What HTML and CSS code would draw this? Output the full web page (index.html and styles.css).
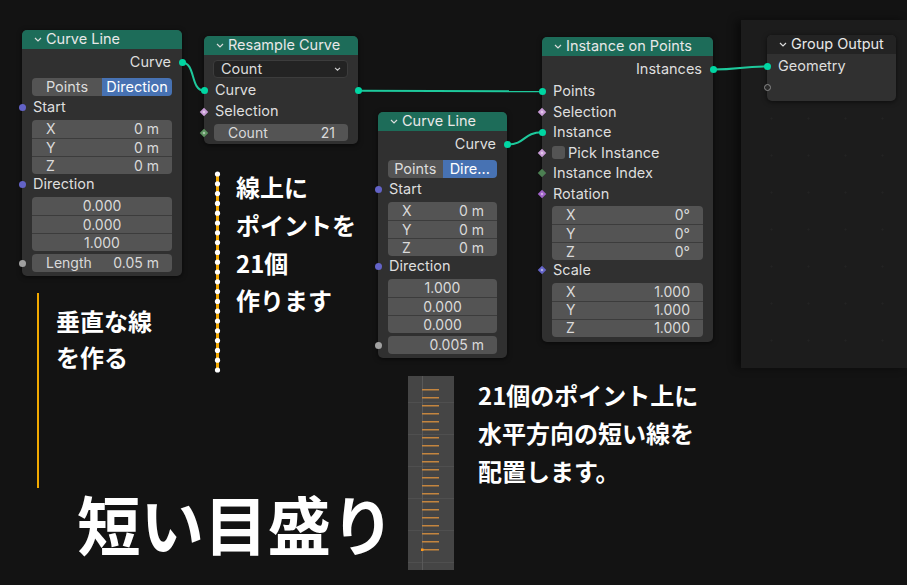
FILE: index.html
```html
<!DOCTYPE html>
<html lang="ja">
<head>
<meta charset="utf-8">
<title>短い目盛り</title>
<link rel="stylesheet" href="styles.css">
</head>
<body>
<div class="stage">
  <div class="editor-panel"></div>

  <svg class="links" width="907" height="585" viewBox="0 0 907 585">
    <path d="M182 62.5 C196 62.5 190 90.5 204 90.5"/>
    <path d="M358 90.8 L542 91.2"/>
    <path d="M507 144.5 C526 144.5 523 132.3 542 132.3"/>
    <path d="M713 69.5 C740 69.5 740 66.5 767 66.5"/>
  </svg>

  <!-- Curve Line (vertical) -->
  <div class="node n1">
    <div class="head"><svg class="chev" viewBox="0 0 8 5"><path d="M1 1 L4 4 L7 1"/></svg>Curve Line</div>
    <div class="body">
      <div class="row out">Curve<span class="sock geo r"></span></div>
      <div class="toggle"><span class="seg">Points</span><span class="seg on">Direction</span></div>
      <div class="row"><span class="sock vecs l"></span>Start</div>
      <div class="vec">
        <div class="vrow"><span>X</span><span>0 m</span></div>
        <div class="vrow"><span>Y</span><span>0 m</span></div>
        <div class="vrow"><span>Z</span><span>0 m</span></div>
      </div>
      <div class="row"><span class="sock vecs l"></span>Direction</div>
      <div class="vec mid">
        <div class="vrow">0.000</div>
        <div class="vrow">0.000</div>
        <div class="vrow">1.000</div>
      </div>
      <div class="frow"><span class="sock flt l"></span><div class="field"><span>Length</span><span>0.05 m</span></div></div>
    </div>
  </div>

  <!-- Resample Curve -->
  <div class="node n2">
    <div class="head"><svg class="chev" viewBox="0 0 8 5"><path d="M1 1 L4 4 L7 1"/></svg>Resample Curve</div>
    <div class="body b2">
      <div class="drop"><span>Count</span><svg class="dchev" viewBox="0 0 7 4"><path d="M1 0.8 L3.5 3.2 L6 0.8"/></svg></div>
      <div class="row"><span class="sock geo l"></span>Curve<span class="sock geo r"></span></div>
      <div class="row"><span class="dia pink l"></span>Selection</div>
      <div class="frow f2"><span class="dia green dot l"></span><div class="field cnt"><span>Count</span><span>21</span></div></div>
    </div>
  </div>

  <!-- Curve Line (short) -->
  <div class="node n3">
    <div class="head"><svg class="chev" viewBox="0 0 8 5"><path d="M1 1 L4 4 L7 1"/></svg>Curve Line</div>
    <div class="body">
      <div class="row out">Curve<span class="sock geo r"></span></div>
      <div class="toggle"><span class="seg">Points</span><span class="seg on">Dire...</span></div>
      <div class="row"><span class="sock vecs l"></span>Start</div>
      <div class="vec">
        <div class="vrow"><span>X</span><span>0 m</span></div>
        <div class="vrow"><span>Y</span><span>0 m</span></div>
        <div class="vrow"><span>Z</span><span>0 m</span></div>
      </div>
      <div class="row"><span class="sock vecs l"></span>Direction</div>
      <div class="vec mid">
        <div class="vrow">1.000</div>
        <div class="vrow">0.000</div>
        <div class="vrow">0.000</div>
      </div>
      <div class="frow"><span class="sock flt l"></span><div class="field end"><span>0.005 m</span></div></div>
    </div>
  </div>

  <!-- Instance on Points -->
  <div class="node n4">
    <div class="head"><svg class="chev" viewBox="0 0 8 5"><path d="M1 1 L4 4 L7 1"/></svg>Instance on Points</div>
    <div class="body b4">
      <div class="row out">Instances<span class="sock geo r"></span></div>
      <div class="row t first"><span class="sock geo l"></span>Points</div>
      <div class="row t"><span class="dia pink l"></span>Selection</div>
      <div class="row t"><span class="sock geo l"></span>Instance</div>
      <div class="row t pick"><span class="dia pink l"></span><span class="check"></span>Pick Instance</div>
      <div class="row t"><span class="dia dgreen l"></span>Instance Index</div>
      <div class="row t"><span class="dia purple l"></span>Rotation</div>
      <div class="vec">
        <div class="vrow"><span>X</span><span>0°</span></div>
        <div class="vrow"><span>Y</span><span>0°</span></div>
        <div class="vrow"><span>Z</span><span>0°</span></div>
      </div>
      <div class="row t"><span class="dia blue l"></span>Scale</div>
      <div class="vec">
        <div class="vrow"><span>X</span><span>1.000</span></div>
        <div class="vrow"><span>Y</span><span>1.000</span></div>
        <div class="vrow"><span>Z</span><span>1.000</span></div>
      </div>
    </div>
  </div>

  <!-- Group Output -->
  <div class="node n5">
    <div class="head dark"><svg class="chev" viewBox="0 0 8 5"><path d="M1 1 L4 4 L7 1"/></svg>Group Output</div>
    <div class="body b5">
      <div class="row"><span class="sock geo l"></span>Geometry</div>
      <div class="row"><span class="sock empty l"></span></div>
    </div>
  </div>

  <!-- annotations -->
  <div class="vline"></div>
  <div class="note note1">垂直な線<br>を作る</div>

  <svg class="dots" width="11" height="205" viewBox="0 0 11 205">
    <line x1="5.5" y1="4" x2="5.5" y2="200"/>
    <circle cx="5.5" cy="4" r="2.6"/><circle cx="5.5" cy="13.8" r="2.6"/><circle cx="5.5" cy="23.6" r="2.6"/>
    <circle cx="5.5" cy="33.4" r="2.6"/><circle cx="5.5" cy="43.2" r="2.6"/><circle cx="5.5" cy="53" r="2.6"/>
    <circle cx="5.5" cy="62.8" r="2.6"/><circle cx="5.5" cy="72.6" r="2.6"/><circle cx="5.5" cy="82.4" r="2.6"/>
    <circle cx="5.5" cy="92.2" r="2.6"/><circle cx="5.5" cy="102" r="2.6"/><circle cx="5.5" cy="111.8" r="2.6"/>
    <circle cx="5.5" cy="121.6" r="2.6"/><circle cx="5.5" cy="131.4" r="2.6"/><circle cx="5.5" cy="141.2" r="2.6"/>
    <circle cx="5.5" cy="151" r="2.6"/><circle cx="5.5" cy="160.8" r="2.6"/><circle cx="5.5" cy="170.6" r="2.6"/>
    <circle cx="5.5" cy="180.4" r="2.6"/><circle cx="5.5" cy="190.2" r="2.6"/><circle cx="5.5" cy="200" r="2.6"/>
  </svg>
  <div class="note note2">線上に<br>ポイントを<br>21個<br>作ります</div>

  <svg class="preview" width="46" height="194" viewBox="0 0 46 194">
    <rect class="pv-bg" x="0" y="0" width="46" height="194"/>
    <g class="pv-grid">
      <line x1="0" y1="26.5" x2="46" y2="26.5"/><line x1="0" y1="58.5" x2="46" y2="58.5"/>
      <line x1="0" y1="90.5" x2="46" y2="90.5"/><line x1="0" y1="122.5" x2="46" y2="122.5"/>
      <line x1="0" y1="154.5" x2="46" y2="154.5"/><line x1="0" y1="186.5" x2="46" y2="186.5"/>
    </g>
    <line class="pv-axis" x1="14.5" y1="0" x2="14.5" y2="194"/>
    <g class="pv-ticks">
      <rect x="14" y="13" width="17" height="1.5"/><rect x="14" y="21" width="17" height="1.5"/>
      <rect x="14" y="29" width="17" height="1.5"/><rect x="14" y="37" width="17" height="1.5"/>
      <rect x="14" y="45" width="17" height="1.5"/><rect x="14" y="53" width="17" height="1.5"/>
      <rect x="14" y="61" width="17" height="1.5"/><rect x="14" y="69" width="17" height="1.5"/>
      <rect x="14" y="77" width="17" height="1.5"/><rect x="14" y="85" width="17" height="1.5"/>
      <rect x="14" y="93" width="17" height="1.5"/><rect x="14" y="101" width="17" height="1.5"/>
      <rect x="14" y="109" width="17" height="1.5"/><rect x="14" y="117" width="17" height="1.5"/>
      <rect x="14" y="125" width="17" height="1.5"/><rect x="14" y="133" width="17" height="1.5"/>
      <rect x="14" y="141" width="17" height="1.5"/><rect x="14" y="149" width="17" height="1.5"/>
      <rect x="14" y="157" width="17" height="1.5"/><rect x="14" y="165" width="17" height="1.5"/>
      <rect x="14" y="173" width="17" height="1.5"/>
    </g>
    <rect class="pv-origin" x="13" y="172.5" width="2.5" height="2.5"/>
  </svg>
  <div class="note note3">21個のポイント上に<br>水平方向の短い線を<br>配置します。</div>

  <div class="big">短い目盛り</div>
</div>
</body>
</html>
```

FILE: styles.css
```css
* { box-sizing: border-box; }
html, body { margin: 0; padding: 0; }
body {
  width: 907px;
  height: 585px;
  overflow: hidden;
  background: #131313;
  font-family: Inter, "Noto Sans", "DejaVu Sans", sans-serif;
  color: #dddddd;
}
.stage { position: relative; width: 907px; height: 585px; }

/* secondary node editor panel on the right */
.editor-panel {
  position: absolute;
  left: 741px; top: 20px;
  width: 166px; height: 348px;
  background-color: #1c1c1c;
  background-image: radial-gradient(circle, #232323 0.8px, transparent 1.2px);
  background-size: 37px 37px;
  background-position: 12px 6px;
  box-shadow: -5px 0 8px rgba(0, 0, 0, 0.45);
}

.links { position: absolute; left: 0; top: 0; }
.links path { fill: none; stroke: #1ec99c; stroke-width: 2; }

/* nodes (free canvas positions) */
.node {
  position: absolute;
  background: #303030;
  border-radius: 5px;
  box-shadow: 0 1px 5px rgba(0, 0, 0, 0.6);
  font-size: 14.5px;
  line-height: 1;
}
.n1 { left: 22px; top: 30px; width: 160px; }
.n2 { left: 204px; top: 36px; width: 154px; }
.n3 { left: 378px; top: 112px; width: 129px; }
.n4 { left: 542px; top: 37px; width: 171px; }
.n5 { left: 767px; top: 35px; width: 129px; }

.head {
  height: 19px;
  display: flex;
  align-items: center;
  gap: 4px;
  padding-left: 12px;
  background: #1d6c59;
  border-radius: 5px 5px 0 0;
  color: #e8e8e8;
  white-space: nowrap;
}
.head.dark { background: #232323; }
.chev { width: 8px; height: 5px; flex: none; }
.chev path { fill: none; stroke: #dcdcdc; stroke-width: 1.2; }

.body { display: flex; flex-direction: column; padding: 3px 0 4px; }
.b2 { padding: 5px 0 3px; }
.b4 { padding: 3px 0 5px; }
.b5 { padding: 2px 0 3px; }

.row {
  position: relative;
  height: 21px;
  display: flex;
  align-items: center;
  padding: 0 11px;
  color: #dedede;
  white-space: nowrap;
}
.row.out { justify-content: flex-end; }
.row.t { height: 20.5px; }
.row.first { margin-top: 1px; }
.row.pick { padding-left: 10px; }

.check {
  width: 13px; height: 13px;
  border-radius: 3px;
  background: #545454;
  margin-right: 3px;
  flex: none;
}

/* sockets overlapping the node edge */
.sock {
  position: absolute;
  top: 50%;
  width: 7px; height: 7px;
  margin-top: -3.5px;
  border-radius: 50%;
}
.sock.l { left: -3.5px; }
.sock.r { right: -3.5px; }
.geo { background: #00d6a3; }
.vecs { background: #6363c7; }
.flt { background: #a1a1a1; }
.empty { background: #2a2a2a; border: 1px solid #8a8a8a; }

.dia {
  position: absolute;
  top: 50%;
  width: 6px; height: 6px;
  margin-top: -3px;
  transform: rotate(45deg);
}
.dia.l { left: -3px; }
.dia::after {
  content: "";
  position: absolute;
  left: 2px; top: 2px;
  width: 2px; height: 2px;
  background: rgba(255, 255, 255, 0.55);
}
.pink { background: #c89bd6; }
.green { background: #5b915e; }
.dgreen { background: #4c7f52; }
.dgreen::after { display: none; }
.purple { background: #a062c8; }
.blue { background: #6363c7; }

/* toggle */
.toggle {
  display: flex;
  height: 18px;
  margin: 5px 10px 1px;
  border-radius: 4px;
  overflow: hidden;
  font-size: 14.5px;
}
.seg {
  flex: 1 1 0;
  display: flex;
  align-items: center;
  justify-content: center;
  background: #545454;
  color: #dcdcdc;
  white-space: nowrap;
  overflow: hidden;
}
.seg.on { background: #4772b3; color: #ffffff; }

/* vector blocks */
.vec {
  margin: 2px 10px 0;
  border-radius: 4px;
  overflow: hidden;
  background: #545454;
  font-size: 14px;
}
.vrow {
  height: 18px;
  display: flex;
  align-items: center;
  justify-content: space-between;
  padding: 0 13px 0 14px;
  color: #dadada;
}
.vrow + .vrow { border-top: 1px solid #3c3c3c; }
.vec.mid .vrow { justify-content: center; padding: 0; }

/* single value fields */
.frow { position: relative; padding: 0 10px; margin-top: 3px; }
.frow .sock.l { left: -3.5px; }
.frow .dia.l { left: -3px; }
.f2 { margin-top: 2px; }
.field {
  height: 18px;
  display: flex;
  align-items: center;
  justify-content: space-between;
  padding: 0 13px 0 14px;
  background: #545454;
  border-radius: 4px;
  font-size: 14px;
  color: #dadada;
  white-space: nowrap;
}
.field.end { justify-content: flex-end; }
.field.cnt { height: 17px; }

.drop {
  height: 18px;
  margin: 0 10px 2px 9px;
  display: flex;
  align-items: center;
  justify-content: space-between;
  padding: 0 6px 0 7px;
  background: #232323;
  border: 1px solid #3c3c3c;
  border-radius: 4px;
  font-size: 14.5px;
  color: #dcdcdc;
}
.dchev { width: 7px; height: 4px; }
.dchev path { fill: none; stroke: #cfcfcf; stroke-width: 1.1; }

/* annotations */
.note {
  position: absolute;
  font-family: "Noto Sans CJK JP", "Noto Sans", sans-serif;
  font-weight: 700;
  font-size: 24px;
  color: #ffffff;
  white-space: nowrap;
}
.note1 { left: 56px; top: 302.5px; line-height: 36.5px; }
.note2 { left: 236px; top: 168px; line-height: 37.8px; }
.note3 { left: 478px; top: 376px; line-height: 38px; }

.vline {
  position: absolute;
  left: 36.5px; top: 293px;
  width: 2.5px; height: 195px;
  background: #f2a900;
}

.dots { position: absolute; left: 212px; top: 170px; }
.dots line { stroke: #f2a900; stroke-width: 3; }
.dots circle { fill: #ffffff; }

.preview { position: absolute; left: 408px; top: 376px; }
.pv-bg { fill: #454545; }
.pv-grid line { stroke: #4f4f4f; stroke-width: 1; }
.pv-axis { stroke: #595959; stroke-width: 1; }
.pv-ticks rect { fill: #c4853f; }
.pv-origin { fill: #ff9a1a; }

.big {
  position: absolute;
  left: 77px; top: 491px;
  font-family: "Noto Sans CJK JP", "Noto Sans", sans-serif;
  font-weight: 700;
  font-size: 63.5px;
  line-height: 63.5px;
  color: #ffffff;
  white-space: nowrap;
}
```
